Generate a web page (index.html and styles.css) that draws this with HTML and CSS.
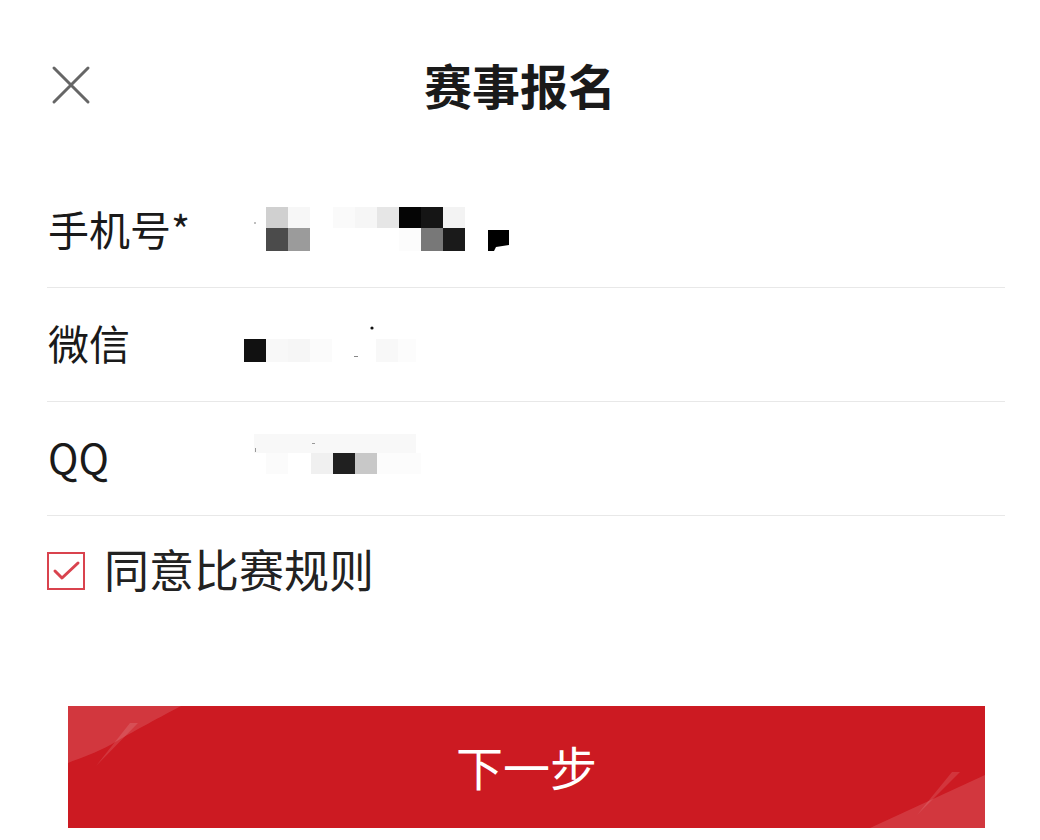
FILE: index.html
```html
<!DOCTYPE html>
<html lang="zh-CN">
<head>
<meta charset="utf-8">
<title>赛事报名</title>
<link rel="stylesheet" href="styles.css">
</head>
<body>
<div class="page">
  <header class="header">
    <button class="close" aria-label="关闭">
      <svg width="40" height="40" viewBox="0 0 40 40"><path d="M3 3 L37 37 M37 3 L3 37" stroke="#666" stroke-width="3" stroke-linecap="round" fill="none"/></svg>
    </button>
    <h1 class="title">赛事报名</h1>
  </header>

  <div class="form">
    <div class="row">
      <span class="label">手机号*</span>
      <svg class="value" width="280" height="50" viewBox="0 0 280 50">
        <circle cx="11" cy="17" r="1" fill="#aaa"/>
        <rect x="22" y="1" width="22" height="21" fill="#d0d0d0"/>
        <rect x="44" y="1" width="22" height="21" fill="#f7f7f7"/>
        <rect x="89" y="1" width="22" height="21" fill="#fafafa"/>
        <rect x="111" y="1" width="22" height="21" fill="#f6f6f6"/>
        <rect x="133" y="1" width="22" height="21" fill="#e6e6e6"/>
        <rect x="155" y="1" width="22" height="21" fill="#050505"/>
        <rect x="177" y="1" width="22" height="21" fill="#151515"/>
        <rect x="199" y="1" width="22" height="21" fill="#f3f3f3"/>
        <rect x="22" y="22" width="22" height="23" fill="#4b4b4b"/>
        <rect x="44" y="22" width="22" height="23" fill="#9b9b9b"/>
        <rect x="155" y="22" width="22" height="23" fill="#fcfcfc"/>
        <rect x="177" y="22" width="22" height="23" fill="#787878"/>
        <rect x="199" y="22" width="22" height="23" fill="#1a1a1a"/>
        <polygon points="244,24 265,24 265,39 252,41 250,45 244,45" fill="#000"/>
      </svg>
    </div>
    <div class="row">
      <span class="label">微信</span>
      <svg class="value" width="280" height="50" viewBox="0 0 280 50">
        <rect x="0" y="19" width="22" height="23" fill="#111"/>
        <rect x="22" y="19" width="22" height="23" fill="#f8f8f8"/>
        <rect x="44" y="19" width="22" height="23" fill="#f6f6f6"/>
        <rect x="66" y="19" width="22" height="23" fill="#fbfbfb"/>
        <rect x="132" y="19" width="22" height="23" fill="#f8f8f8"/>
        <rect x="154" y="19" width="18" height="23" fill="#fcfcfc"/>
        <circle cx="128" cy="8" r="1.6" fill="#111"/>
        <rect x="110" y="36" width="4" height="1" fill="#888"/>
      </svg>
    </div>
    <div class="row">
      <span class="label">QQ</span>
      <svg class="value" width="280" height="50" viewBox="0 0 280 50">
        <rect x="10" y="0" width="162" height="19" fill="#f8f8f8"/>
        <rect x="22" y="19" width="22" height="21" fill="#fbfbfb"/>
        <rect x="67" y="19" width="22" height="21" fill="#f0f0f0"/>
        <rect x="89" y="19" width="22" height="21" fill="#202020"/>
        <rect x="111" y="19" width="22" height="21" fill="#c8c8c8"/>
        <rect x="133" y="19" width="44" height="21" fill="#fcfcfc"/>
        <rect x="11" y="14" width="1" height="4" fill="#999"/>
        <rect x="68" y="9" width="3" height="1" fill="#999"/>
      </svg>
    </div>

    <label class="agree">
      <span class="checkbox">
        <svg width="34" height="34" viewBox="0 0 34 34"><path d="M6 17 L13 24 L29 9" stroke="#d9434e" stroke-width="3" fill="none" stroke-linecap="round" stroke-linejoin="round"/></svg>
      </span>
      <span class="agree-text">同意比赛规则</span>
    </label>
  </div>

  <button class="next">
    <svg class="shine" width="917" height="122" viewBox="0 0 917 122" aria-hidden="true">
      <path d="M0 0 H113 C96 9 64 26 44 38 C28 47 12 52 0 57 Z" fill="rgba(255,255,255,0.13)"/>
      <polygon points="62,17 70,17 28,60" fill="rgba(255,255,255,0.12)"/>
      <path d="M917 69 V122 H802 Z" fill="rgba(255,255,255,0.13)"/>
      <polygon points="884,66 892,66 849,109" fill="rgba(255,255,255,0.12)"/>
    </svg>
    <span class="next-text">下一步</span>
  </button>
</div>
</body>
</html>
```

FILE: styles.css
```css
html, body {
  margin: 0;
  padding: 0;
  background: #fff;
}
body {
  font-family: "Noto Sans CJK SC", "Noto Sans", sans-serif;
  color: #1a1a1a;
  width: 1040px;
  height: 840px;
  overflow: hidden;
}
.page {
  display: flex;
  flex-direction: column;
}
.header {
  position: relative;
  height: 174px;
  display: flex;
  align-items: center;
  justify-content: center;
}
.close {
  position: absolute;
  left: 51px;
  top: 65px;
  width: 40px;
  height: 40px;
  padding: 0;
  border: 0;
  background: none;
  display: flex;
}
.title {
  margin: 0 0 7px 0;
  font-size: 48px;
  line-height: 1;
  font-weight: 700;
  color: #1a1a1a;
}
.form {
  margin: 0 35px 0 47px;
  display: flex;
  flex-direction: column;
}
.row {
  height: 113px;
  border-bottom: 1px solid #e8e8e8;
  display: flex;
  align-items: center;
}
.label {
  width: 196px;
  padding-left: 1px;
  padding-bottom: 4px;
  font-size: 41px;
  color: #1a1a1a;
  line-height: 1;
}
.value {
  display: block;
}
.agree {
  height: 110px;
  display: flex;
  align-items: center;
  gap: 19px;
}
.checkbox {
  width: 34px;
  height: 34px;
  border: 2px solid #d9434e;
  display: flex;
  align-items: center;
  justify-content: center;
}
.checkbox svg {
  display: block;
}
.agree-text {
  font-size: 45px;
  color: #222;
  line-height: 1;
  padding-bottom: 6px;
}
.next {
  position: relative;
  overflow: hidden;
  margin: 80px 0 0 68px;
  width: 917px;
  height: 122px;
  border: 0;
  padding: 0;
  background: #cc1a22;
  color: #fff;
  font-family: "Noto Sans CJK SC", "Noto Sans", sans-serif;
  display: flex;
  align-items: center;
  justify-content: center;
}
.shine {
  position: absolute;
  left: 0;
  top: 0;
}
.next-text {
  position: relative;
  font-size: 47px;
  font-weight: 400;
  line-height: 1;
  padding-bottom: 4px;
}
```
